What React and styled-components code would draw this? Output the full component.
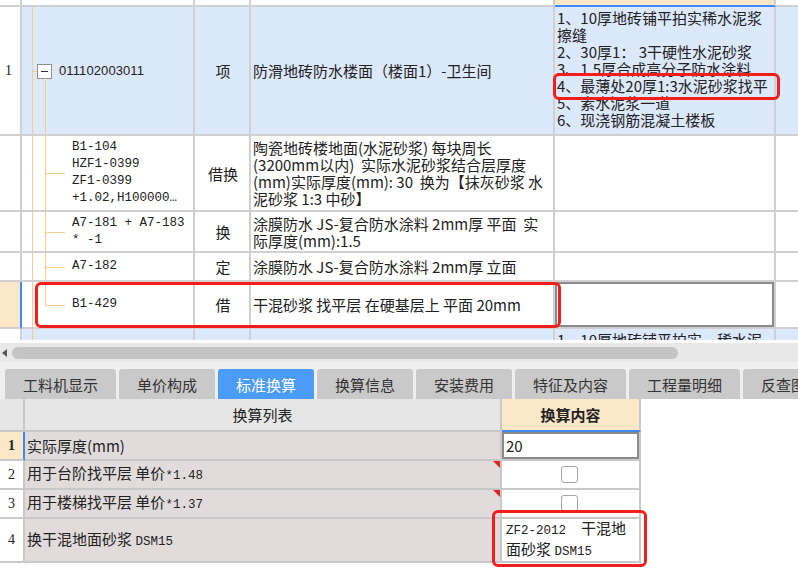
import styled, { createGlobalStyle } from 'styled-components';

const LINE = '#d0d0d0';
const TREE = '#fbc98c';
const BLUE = '#3d8af7';
const PEACH = '#fde7c9';

const GlobalStyle = createGlobalStyle`
  * { box-sizing: border-box; }
  body {
    margin: 0;
    background: #fff;
    font-family: "Noto Sans CJK SC", "Liberation Sans", sans-serif;
    font-size: 15px;
    color: #222;
  }
`;

export default function App() {
    return (
        <Page>
            <GlobalStyle />
            <TopGrid>
                <GridRow $h={7}>
                    <Cell />
                    <Cell />
                    <Cell />
                    <Cell />
                    <Cell $bg={PEACH} $bottom={BLUE} />
                    <Cell />
                </GridRow>

                <GridRow $h={129} $bg="#dce8fc">
                    <NumCell>1</NumCell>
                    <CodeCell>
                        <Guide $w={5} $branch={5} />
                        <Expander />
                        <ItemCode>011102003011</ItemCode>
                    </CodeCell>
                    <Cell $center>项</Cell>
                    <Cell><Lines>防滑地砖防水楼面（楼面1）-卫生间</Lines></Cell>
                    <Cell $top>
                        <Lines>{`1、10厚地砖铺平拍实稀水泥浆
擦缝
2、30厚1： 3干硬性水泥砂浆
3、1.5厚合成高分子防水涂料
4、最薄处20厚1:3水泥砂浆找平
5、素水泥浆一道
6、现浇钢筋混凝土楼板`}</Lines>
                    </Cell>
                    <Cell />
                </GridRow>

                <GridRow $h={76}>
                    <NumCell />
                    <CodeCell>
                        <Guide $w={13} />
                        <Guide $w={27} $branch={20} />
                        <Mono>{`B1-104
HZF1-0399
ZF1-0399
+1.02,H100000…`}</Mono>
                    </CodeCell>
                    <Cell $center>借换</Cell>
                    <Cell>
                        <Lines>{`陶瓷地砖楼地面(水泥砂浆) 每块周长
(3200mm以内)  实际水泥砂浆结合层厚度
(mm)实际厚度(mm): 30  换为【抹灰砂浆 水
泥砂浆 1:3 中砂】`}</Lines>
                    </Cell>
                    <Cell />
                    <Cell />
                </GridRow>

                <GridRow $h={41}>
                    <NumCell />
                    <CodeCell>
                        <Guide $w={13} />
                        <Guide $w={27} $branch={20} />
                        <Mono>{`A7-181 + A7-183
* -1`}</Mono>
                    </CodeCell>
                    <Cell $center>换</Cell>
                    <Cell>
                        <Lines>{`涂膜防水 JS-复合防水涂料 2mm厚 平面  实
际厚度(mm):1.5`}</Lines>
                    </Cell>
                    <Cell />
                    <Cell />
                </GridRow>

                <GridRow $h={29}>
                    <NumCell />
                    <CodeCell>
                        <Guide $w={13} />
                        <Guide $w={27} $branch={20} />
                        <Mono>A7-182</Mono>
                    </CodeCell>
                    <Cell $center>定</Cell>
                    <Cell><Lines>涂膜防水 JS-复合防水涂料 2mm厚 立面</Lines></Cell>
                    <Cell />
                    <Cell />
                </GridRow>

                <GridRow $h={47}>
                    <NumCell $bg={PEACH} $edge={BLUE} />
                    <CodeCell>
                        <Guide $w={13} />
                        <Guide $w={27} $branch={20} $end />
                        <Mono>B1-429</Mono>
                    </CodeCell>
                    <Cell $center>借</Cell>
                    <Cell><Lines>干混砂浆 找平层 在硬基层上 平面 20mm</Lines></Cell>
                    <Cell $selected />
                    <Cell />
                </GridRow>

                <GridRow $h={20} $bg="#dce8fc">
                    <NumCell $bottom="transparent" />
                    <CodeCell $bottom="transparent">
                        <Guide $w={13} />
                    </CodeCell>
                    <Cell $bottom="transparent" />
                    <Cell $bottom="transparent" />
                    <Cell $top $bottom="transparent">
                        <Lines>1、10厚地砖铺平拍实，稀水泥</Lines>
                    </Cell>
                    <Cell $bottom="transparent" />
                </GridRow>

                <RedBox style={{ left: 553, top: 73, width: 227, height: 27 }} />
                <RedBox style={{ left: 35, top: 282, width: 526, height: 46 }} />
            </TopGrid>

            <HScroll>
                <ArrowLeft />
                <Thumb />
            </HScroll>

            <TabBar>
                <Tab>工料机显示</Tab>
                <Tab>单价构成</Tab>
                <Tab $active>标准换算</Tab>
                <Tab>换算信息</Tab>
                <Tab>安装费用</Tab>
                <Tab>特征及内容</Tab>
                <Tab>工程量明细</Tab>
                <Tab>反查图形工程量</Tab>
            </TabBar>

            <BottomTable>
                <BRow $h={33}>
                    <BNum $bg="#e6e6e6" />
                    <BHead>换算列表</BHead>
                    <BHead $bg={PEACH} $bottom={BLUE} $bold>换算内容</BHead>
                </BRow>
                <BRow $h={29}>
                    <BNum $bg={PEACH} $edge={BLUE} $bold>1</BNum>
                    <BLabel><Inline>实际厚度(mm)</Inline></BLabel>
                    <BValue $selected>20</BValue>
                </BRow>
                <BRow $h={29}>
                    <BNum>2</BNum>
                    <BLabel $flag><Inline>用于台阶找平层 单价<Mono>*1.48</Mono></Inline></BLabel>
                    <BValue $center><CheckBox /></BValue>
                </BRow>
                <BRow $h={29}>
                    <BNum>3</BNum>
                    <BLabel $flag><Inline>用于楼梯找平层 单价<Mono>*1.37</Mono></Inline></BLabel>
                    <BValue $center><CheckBox /></BValue>
                </BRow>
                <BRow $h={43}>
                    <BNum>4</BNum>
                    <BLabel><Inline>换干混地面砂浆 <Mono>DSM15</Mono></Inline></BLabel>
                    <BValue>
                        <Lines>
                            <Mono>ZF2-2012  </Mono>干混地{'\n'}面砂浆 <Mono>DSM15</Mono>
                        </Lines>
                    </BValue>
                </BRow>
                <RedBox style={{ left: 492, top: 111, width: 155, height: 57 }} />
            </BottomTable>
        </Page>
    );
}

const Page = styled.div`
    width: 798px;
    height: 586px;
    overflow: hidden;
    background: #fff;
`;

const TopGrid = styled.div`
    position: relative;
    height: 340px;
    overflow: hidden;
`;

const GridRow = styled.div`
    display: grid;
    grid-template-columns: 22px 173px 56px 304px 221px 1fr;
    height: ${p => p.$h}px;
    background: ${p => p.$bg || '#fff'};
`;

const Cell = styled.div`
    display: flex;
    align-items: ${p => p.$top ? 'flex-start' : 'center'};
    justify-content: ${p => p.$center ? 'center' : 'flex-start'};
    padding: ${p => p.$top ? '2px 0 0 2px' : '0 0 0 2px'};
    min-width: 0;
    overflow: hidden;
    background: ${p => p.$bg || 'transparent'};
    border-right: 2px solid ${LINE};
    border-bottom: 2px solid ${p => p.$bottom || LINE};
    box-shadow: ${p => p.$selected ? 'inset 0 0 0 2px #8a8a8a' : 'none'};
    &:last-child { border-right: none; }
`;

const NumCell = styled(Cell)`
    padding-left: 5px;
    background: ${p => p.$bg || '#fff'};
    border-right-color: ${p => p.$edge || LINE};
    font-family: "Liberation Serif", serif;
    font-size: 14px;
`;

const CodeCell = styled(Cell)`
    padding-left: 10px;
    align-items: center;
`;

const Guide = styled.span`
    position: relative;
    flex: none;
    align-self: stretch;
    width: ${p => p.$w}px;
    &::before {
        content: '';
        position: absolute;
        left: 0;
        top: 0;
        bottom: ${p => p.$end ? '50%' : '0'};
        width: 1px;
        background: ${TREE};
    }
    &::after {
        content: '';
        display: ${p => p.$branch ? 'block' : 'none'};
        position: absolute;
        left: 0;
        top: 50%;
        width: ${p => p.$branch || 0}px;
        height: 1px;
        background: ${TREE};
    }
`;

const Expander = styled.span`
    position: relative;
    flex: none;
    width: 15px;
    height: 15px;
    margin-top: 1px;
    background: #fff;
    border: 1px solid #8e8e8e;
    &::before {
        content: '';
        position: absolute;
        left: 3px;
        top: 6px;
        width: 7px;
        height: 1px;
        background: #333;
    }
    &::after {
        content: '';
        position: absolute;
        left: 7px;
        top: 100%;
        width: 1px;
        height: 70px;
        background: ${TREE};
    }
`;

const ItemCode = styled.span`
    margin-left: 7px;
    font-family: "Liberation Sans", sans-serif;
    font-size: 13px;
    letter-spacing: 0.1px;
`;

const Mono = styled.span`
    font-family: "Liberation Mono", "Noto Sans CJK SC", monospace;
    font-size: 12.5px;
    line-height: 17px;
    white-space: pre;
`;

const Inline = styled.span`
    white-space: pre;
    line-height: 17px;
`;

const Lines = styled.div`
    white-space: pre;
    line-height: 17px;
    font-size: 15px;
`;

const RedBox = styled.div`
    position: absolute;
    border: 3px solid #f41d1d;
    border-radius: 6px;
    pointer-events: none;
`;

const HScroll = styled.div`
    margin-top: 3px;
    height: 19px;
    display: flex;
    align-items: center;
    padding-left: 2px;
    background: #e8e8e8;
`;

const ArrowLeft = styled.span`
    width: 0;
    height: 0;
    border-top: 4px solid transparent;
    border-bottom: 4px solid transparent;
    border-right: 5px solid #555;
`;

const Thumb = styled.div`
    margin-left: 5px;
    width: 666px;
    height: 12px;
    border-radius: 6px;
    background: #c4c4c4;
`;

const TabBar = styled.div`
    display: flex;
    gap: 3px;
    height: 37px;
    padding: 7px 0 0 5px;
    background: #efefef;
    overflow: hidden;
`;

const Tab = styled.div`
    flex: none;
    height: 30px;
    padding: 0 18px;
    display: flex;
    align-items: center;
    white-space: nowrap;
    border-radius: 3px 3px 0 0;
    background: ${p => p.$active ? '#4a9cf8' : '#c9c9c9'};
    color: ${p => p.$active ? '#fff' : '#333'};
`;

const BottomTable = styled.div`
    position: relative;
    width: 641px;
`;

const BRow = styled.div`
    display: grid;
    grid-template-columns: 25px 477px 139px;
    height: ${p => p.$h}px;
`;

const BCell = styled.div`
    position: relative;
    display: flex;
    align-items: center;
    min-width: 0;
    border-right: 2px solid #c8c8c8;
    border-bottom: 2px solid ${p => p.$bottom || '#c8c8c8'};
`;

const BNum = styled(BCell)`
    justify-content: center;
    background: ${p => p.$bg || '#fff'};
    border-right-color: ${p => p.$edge || '#c8c8c8'};
    font-family: "Liberation Serif", serif;
    font-size: 14px;
    font-weight: ${p => p.$bold ? 700 : 400};
`;

const BHead = styled(BCell)`
    justify-content: center;
    background: ${p => p.$bg || '#e6e6e6'};
    font-weight: ${p => p.$bold ? 700 : 400};
`;

const BLabel = styled(BCell)`
    padding-left: 2px;
    background: #e1dcdb;
    &::after {
        content: '';
        display: ${p => p.$flag ? 'block' : 'none'};
        position: absolute;
        top: 0;
        right: 0;
        border-top: 7px solid #e42020;
        border-left: 7px solid transparent;
    }
`;

const BValue = styled(BCell)`
    justify-content: ${p => p.$center ? 'center' : 'flex-start'};
    padding-left: ${p => p.$center ? '0' : '4px'};
    background: #fff;
    box-shadow: ${p => p.$selected ? 'inset 0 0 0 2px #8a8a8a' : 'none'};
`;

const CheckBox = styled.span`
    width: 17px;
    height: 17px;
    margin-right: 2px;
    border: 1.5px solid #a3a3a3;
    border-radius: 3px;
    background: #fff;
`;
